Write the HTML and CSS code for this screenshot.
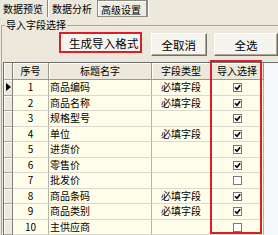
FILE: index.html
```html
<!DOCTYPE html>
<html lang="zh">
<head>
<meta charset="utf-8">
<link rel="stylesheet" href="styles.css">
</head>
<body>
<div class="tabs">
  <span class="tab t1">数据预览</span><span class="sep"></span><span class="tab t2">数据分析</span><span class="tab active">高级设置</span><span class="sep"></span>
</div>
<fieldset class="group">
  <legend>导入字段选择</legend>
  <div class="btnrow">
    <div class="hl"><div class="btn gen">生成导入格式</div></div>
    <div class="btn cancel">全取消</div>
    <div class="btn all">全选</div>
  </div>
  <div class="gridwrap">
    <div class="grid">
      <div class="hd ind"></div><div class="hd c">序号</div><div class="hd c">标题名字</div><div class="hd c">字段类型</div><div class="hd c">导入选择</div><div class="hd rest"></div>

      <div class="ind"><span class="arrow"></span></div><div class="cell c">1</div><div class="cell">商品编码</div><div class="cell c">必填字段</div><div class="cell c"><svg class="cb" viewBox="0 0 9 9"><rect x=".5" y=".5" width="8" height="8" fill="#fff" stroke="#7a7a7a"/><path d="M2 4.2l2 2 3.2-4" stroke="#000" stroke-width="1.6" fill="none"/></svg></div><div class="rest"></div>

      <div class="ind"></div><div class="cell c">2</div><div class="cell">商品名称</div><div class="cell c">必填字段</div><div class="cell c"><svg class="cb" viewBox="0 0 9 9"><rect x=".5" y=".5" width="8" height="8" fill="#fff" stroke="#7a7a7a"/><path d="M2 4.2l2 2 3.2-4" stroke="#000" stroke-width="1.6" fill="none"/></svg></div><div class="rest"></div>

      <div class="ind"></div><div class="cell c">3</div><div class="cell">规格型号</div><div class="cell c"></div><div class="cell c"><svg class="cb" viewBox="0 0 9 9"><rect x=".5" y=".5" width="8" height="8" fill="#fff" stroke="#7a7a7a"/><path d="M2 4.2l2 2 3.2-4" stroke="#000" stroke-width="1.6" fill="none"/></svg></div><div class="rest"></div>

      <div class="ind"></div><div class="cell c">4</div><div class="cell">单位</div><div class="cell c">必填字段</div><div class="cell c"><svg class="cb" viewBox="0 0 9 9"><rect x=".5" y=".5" width="8" height="8" fill="#fff" stroke="#7a7a7a"/><path d="M2 4.2l2 2 3.2-4" stroke="#000" stroke-width="1.6" fill="none"/></svg></div><div class="rest"></div>

      <div class="ind"></div><div class="cell c">5</div><div class="cell">进货价</div><div class="cell c"></div><div class="cell c"><svg class="cb" viewBox="0 0 9 9"><rect x=".5" y=".5" width="8" height="8" fill="#fff" stroke="#7a7a7a"/><path d="M2 4.2l2 2 3.2-4" stroke="#000" stroke-width="1.6" fill="none"/></svg></div><div class="rest"></div>

      <div class="ind"></div><div class="cell c">6</div><div class="cell">零售价</div><div class="cell c"></div><div class="cell c"><svg class="cb" viewBox="0 0 9 9"><rect x=".5" y=".5" width="8" height="8" fill="#fff" stroke="#7a7a7a"/><path d="M2 4.2l2 2 3.2-4" stroke="#000" stroke-width="1.6" fill="none"/></svg></div><div class="rest"></div>

      <div class="ind"></div><div class="cell c">7</div><div class="cell">批发价</div><div class="cell c"></div><div class="cell c"><svg class="cb" viewBox="0 0 9 9"><rect x=".5" y=".5" width="8" height="8" fill="#fff" stroke="#7a7a7a"/></svg></div><div class="rest"></div>

      <div class="ind"></div><div class="cell c">8</div><div class="cell">商品条码</div><div class="cell c">必填字段</div><div class="cell c"><svg class="cb" viewBox="0 0 9 9"><rect x=".5" y=".5" width="8" height="8" fill="#fff" stroke="#7a7a7a"/><path d="M2 4.2l2 2 3.2-4" stroke="#000" stroke-width="1.6" fill="none"/></svg></div><div class="rest"></div>

      <div class="ind"></div><div class="cell c">9</div><div class="cell">商品类别</div><div class="cell c">必填字段</div><div class="cell c"><svg class="cb" viewBox="0 0 9 9"><rect x=".5" y=".5" width="8" height="8" fill="#fff" stroke="#7a7a7a"/><path d="M2 4.2l2 2 3.2-4" stroke="#000" stroke-width="1.6" fill="none"/></svg></div><div class="rest"></div>

      <div class="ind"></div><div class="cell c">10</div><div class="cell">主供应商</div><div class="cell c"></div><div class="cell c"><svg class="cb" viewBox="0 0 9 9"><rect x=".5" y=".5" width="8" height="8" fill="#fff" stroke="#7a7a7a"/></svg></div><div class="rest"></div>
    </div>
    <div class="colmark"></div>
  </div>
</fieldset>
</body>
</html>
```
FILE: styles.css
```css
html, body {
  margin: 0;
  padding: 0;
}
body {
  width: 278px;
  height: 235px;
  overflow: hidden;
  background: #ece9dc;
  font-family: "Noto Sans CJK SC", "Noto Sans", sans-serif;
  font-size: 10px;
  color: #000;
}
.tabs {
  display: flex;
  height: 18px;
  align-items: flex-start;
}
.tab {
  height: 17px;
  line-height: 17px;
  box-sizing: border-box;
  white-space: nowrap;
}
.t1 { padding: 0 4px 0 3px; }
.t2 { padding: 0 5px 0 3px; }
.tab.active {
  width: 50px;
  padding-left: 3px;
  border: 1px solid #8c8a80;
  box-shadow: inset 1px 1px #fff;
  background: #eeebe0;
}
.sep {
  width: 1px;
  height: 17px;
  background: #8c8a80;
  border-right: 1px solid #fff;
}
.group {
  margin: 1px 0 0 1px;
  padding: 0;
  border: 0;
  border-top: 1px solid #aca899;
  border-left: 1px solid #aca899;
  min-width: 0;
}
.group legend {
  margin-left: 3px;
  padding: 0 1px;
  line-height: 12px;
  font-size: 10px;
}
.btnrow {
  display: flex;
  align-items: flex-start;
  padding-top: 1px;
  height: 24px;
}
.hl {
  margin-left: 57px;
  width: 89px;
  height: 21px;
  box-sizing: border-box;
  border: 2px solid #dd1e24;
  display: flex;
}
.btn {
  box-sizing: border-box;
  background: #f5f4ef;
  font-size: 11.5px;
  display: flex;
  align-items: center;
  justify-content: center;
  white-space: nowrap;
}
.gen {
  flex: 1;
  justify-content: flex-end;
  padding-right: 1px;
  border-left: 1px solid #fff;
  border-top: 1px solid #fff;
  letter-spacing: 0.1px;
}
.cancel, .all {
  margin-top: 1px;
  height: 23px;
  border: 1px solid #fff;
  border-right-color: #716f64;
  border-bottom-color: #716f64;
  box-shadow: inset -1px -1px #aca899;
}
.cancel {
  margin-left: 9px;
  width: 61px;
}
.all {
  margin-left: 7px;
  width: 64px;
  flex-shrink: 0;
}
.gridwrap {
  position: relative;
  margin: 6px 0 0 1px;
}
.grid {
  display: grid;
  grid-template-columns: 9px 36px 103px 59px 53px 1fr;
  grid-template-rows: 17px;
  grid-auto-rows: 15.5px;
  border-left: 1px solid #6f6f6f;
  border-top: 1px solid #6f6f6f;
}
.grid > div {
  box-sizing: border-box;
  white-space: nowrap;
  overflow: hidden;
}
.hd {
  background: #ece9dc;
  border-right: 1px solid #9a9890;
  border-bottom: 1px solid #9a9890;
  box-shadow: inset 1px 1px #fff;
  line-height: 16px;
}
.ind {
  background: #ece9dc;
  border-right: 1px solid #7f7f7f;
  border-bottom: 1px solid #a8a69c;
  box-shadow: inset 1px 1px #fff;
  display: flex;
  align-items: center;
  padding-left: 2px;
}
.cell {
  background: #fffeea;
  border-right: 1px solid #b4b2aa;
  border-bottom: 1px solid #d9d8cc;
  line-height: 14.5px;
  padding-left: 1px;
}
.c {
  text-align: center;
  padding-left: 0;
}
.rest {
  background: #f7f8fb;
}
.hd.rest {
  background: #f7f8fb;
  box-shadow: none;
  border: 0;
}
.arrow {
  width: 0;
  height: 0;
  border-left: 5px solid #000;
  border-top: 4px solid transparent;
  border-bottom: 4px solid transparent;
}
.cb {
  width: 9px;
  height: 9px;
  vertical-align: -1px;
}
.colmark {
  position: absolute;
  top: -2px;
  left: 207px;
  width: 52px;
  height: 174px;
  box-sizing: border-box;
  border: 2px solid #dd1e24;
}
```
